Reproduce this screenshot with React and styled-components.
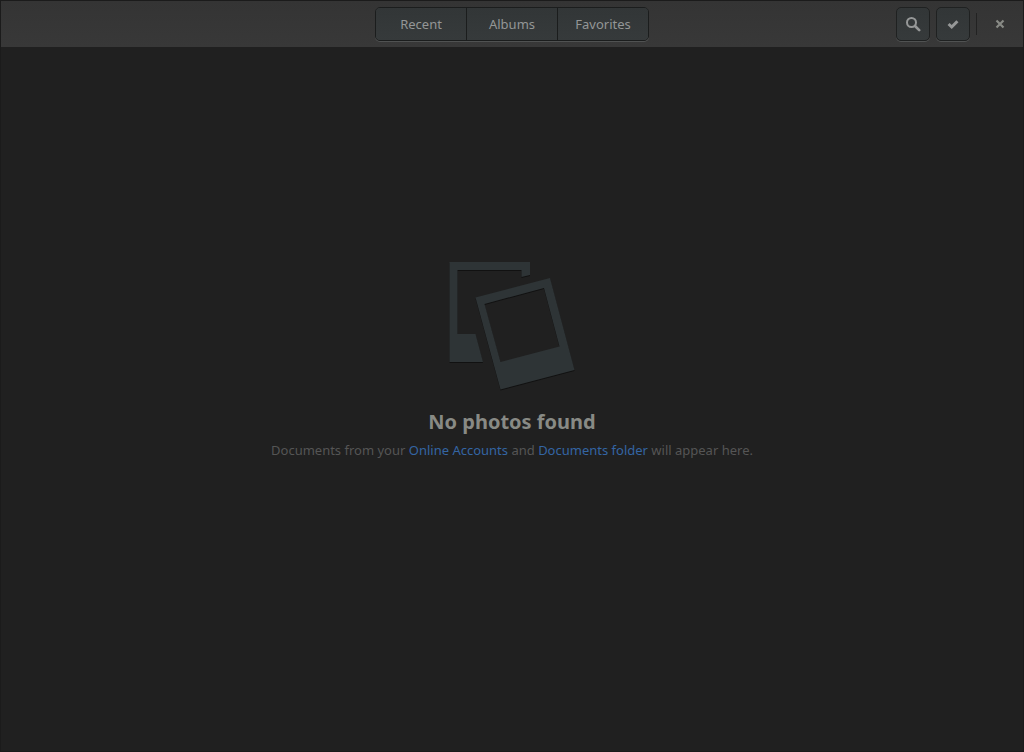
import React, { useState } from "react";
import styled, { createGlobalStyle } from "styled-components";

const GlobalStyle = createGlobalStyle`
  *, *::before, *::after { box-sizing: border-box; }
  body {
    margin: 0;
    background: #202020;
    font-family: "Noto Sans", "Open Sans", sans-serif;
    font-size: 13px;
    line-height: 20px;
  }
`;

const Window = styled.div`
  display: flex;
  flex-direction: column;
  min-height: 100vh;
  border: 1px solid #1b1b1b;
  background: #202020;
`;

const HeaderBar = styled.header`
  display: grid;
  grid-template-columns: 1fr auto 1fr;
  align-items: center;
  padding: 6px;
  background: #363636;
  background-image: linear-gradient(#343434, #383838);
`;

const ViewSwitcher = styled.nav`
  grid-column: 2;
  display: flex;
  border: 1px solid #1b1d1d;
  border-radius: 5px;
  box-shadow: 0 1px #505252;
  overflow: hidden;
`;

const ViewButton = styled.button`
  width: ${({ $first }) => ($first ? "90px" : "91px")};
  height: 32px;
  padding: 0;
  border: 0;
  border-left: ${({ $first }) => ($first ? "0" : "1px solid #1b1d1d")};
  background: linear-gradient(#323637, #363a3b);
  color: #939696;
  font: inherit;
`;

const HeaderActions = styled.div`
  display: flex;
  align-items: center;
  justify-content: flex-end;
  gap: 6px;
`;

const IconButton = styled.button`
  display: grid;
  place-items: center;
  width: 34px;
  height: 34px;
  padding: 0;
  border: 1px solid ${({ $flat }) => ($flat ? "transparent" : "#1f2121")};
  border-radius: 5px;
  background: ${({ $flat }) => ($flat ? "none" : "linear-gradient(#323637, #363a3b)")};
  box-shadow: ${({ $flat }) => ($flat ? "none" : "0 1px #505252")};
  color: ${({ $flat }) => ($flat ? "#888a85" : "#969898")};
`;

const Separator = styled.span`
  width: 1px;
  height: 22px;
  background: #222222;
`;

const EmptyState = styled.main`
  flex: 1;
  display: flex;
  flex-direction: column;
  align-items: center;
  justify-content: center;
  padding: 0 16px 74px;
  text-align: center;
`;

const PhotosArt = styled.svg`
  width: 128px;
  height: 130px;
  fill: #2e3436;
  filter: drop-shadow(0 1px 0 #111111);
`;

const Title = styled.h1`
  margin: 18px 0 0;
  color: #888a85;
  font-size: 20px;
  line-height: 28px;
  font-weight: 700;
`;

const Message = styled.p`
  margin: 0;
  padding: 4px 0;
  color: #555555;
`;

const MessageLink = styled.a`
  color: #3465a4;
  text-decoration: none;
`;

const views = ["Recent", "Albums", "Favorites"];

export default function App() {
  const [view, setView] = useState("Recent");
  return (
    <>
      <GlobalStyle />
      <Window>
        <HeaderBar>
          <ViewSwitcher aria-label="Views">
            {views.map((name, i) => (
              <ViewButton
                key={name}
                type="button"
                $first={i === 0}
                aria-pressed={view === name}
                onClick={() => setView(name)}
              >
                {name}
              </ViewButton>
            ))}
          </ViewSwitcher>
          <HeaderActions>
            <IconButton type="button" aria-label="Search">
              <svg width="16" height="16" viewBox="0 0 16 16" fill="none" stroke="currentColor">
                <circle cx="6.5" cy="6.5" r="4.5" strokeWidth="2" />
                <path d="M10 10L14.2 14.2" strokeWidth="2.6" strokeLinecap="round" />
              </svg>
            </IconButton>
            <IconButton type="button" aria-label="Select">
              <svg width="16" height="16" viewBox="0 0 16 16" fill="none" stroke="currentColor">
                <path d="M3.6 8L6.7 11L12.4 5.2" strokeWidth="3" />
              </svg>
            </IconButton>
            <Separator />
            <IconButton type="button" aria-label="Close" $flat>
              <svg width="16" height="16" viewBox="0 0 16 16" fill="none" stroke="currentColor">
                <path d="M4.5 4.5L11.5 11.5M11.5 4.5L4.5 11.5" strokeWidth="2.2" />
              </svg>
            </IconButton>
          </HeaderActions>
        </HeaderBar>
        <EmptyState>
          <PhotosArt viewBox="0 0 128 130" aria-hidden="true">
            <path d="M1.5 2H82V15L73.5 17V10H9.5V74H27.5L35 102H1.5Z" />
            <path
              fillRule="evenodd"
              d="M27.5 37.5L102 18L126.500 110L52.5 129.5ZM36.5 44L96 28L111.5 86.5L52.5 102Z"
            />
          </PhotosArt>
          <Title>No photos found</Title>
          <Message>
            Documents from your <MessageLink href="#accounts">Online Accounts</MessageLink> and{" "}
            <MessageLink href="#documents">Documents folder</MessageLink> will appear here.
          </Message>
        </EmptyState>
      </Window>
    </>
  );
}
